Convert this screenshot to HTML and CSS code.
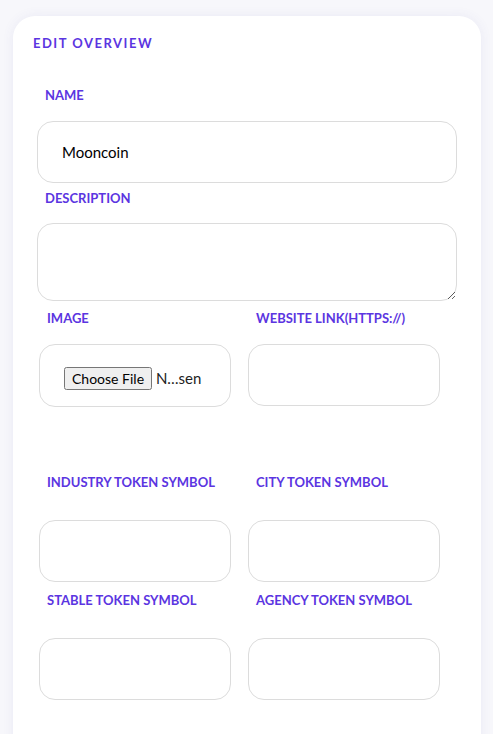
FILE: index.html
```html
<!DOCTYPE html>
<html lang="en">
<head>
<meta charset="utf-8">
<title>Edit Overview</title>
<link rel="stylesheet" href="styles.css">
</head>
<body>
<div class="card">
  <h2 class="title">EDIT OVERVIEW</h2>
  <div class="form">
    <label class="label label-name" for="name">NAME</label>
    <input class="text-input" id="name" type="text" value="Mooncoin">
    <label class="label label-desc" for="desc">DESCRIPTION</label>
    <textarea class="text-area" id="desc"></textarea>

    <div class="pair pair-1">
      <div class="field">
        <label class="label label-sm">IMAGE</label>
        <input class="box file-box" type="file">
      </div>
      <div class="field">
        <label class="label label-sm">WEBSITE LINK(HTTPS://)</label>
        <input class="box" type="text">
      </div>
    </div>

    <div class="pair pair-2">
      <div class="field">
        <label class="label label-lg">INDUSTRY TOKEN SYMBOL</label>
        <input class="box" type="text">
      </div>
      <div class="field">
        <label class="label label-lg">CITY TOKEN SYMBOL</label>
        <input class="box" type="text">
      </div>
    </div>

    <div class="pair pair-3">
      <div class="field">
        <label class="label label-lg">STABLE TOKEN SYMBOL</label>
        <input class="box" type="text">
      </div>
      <div class="field">
        <label class="label label-lg">AGENCY TOKEN SYMBOL</label>
        <input class="box" type="text">
      </div>
    </div>
  </div>
</div>
</body>
</html>
```

FILE: styles.css
```css
html, body {
  margin: 0;
  padding: 0;
}
body {
  background: #f7f7fb;
  font-family: "Lato", "Liberation Sans", sans-serif;
  color: #000;
  overflow: hidden;
  height: 734px;
}
.card {
  margin: 16px 12px 0 13px;
  padding: 19px 24px 40px 20px;
  background: #ffffff;
  border-radius: 22px;
  box-shadow: 0 0 12px rgba(80, 80, 160, 0.08);
  min-height: 760px;
  box-sizing: border-box;
}
.title {
  margin: 0;
  font-size: 13px;
  line-height: 16px;
  font-weight: 700;
  letter-spacing: 1.5px;
  color: #5b35e1;
}
.form {
  padding-left: 4px;
  display: flex;
  flex-direction: column;
}
.label {
  display: block;
  font-size: 13px;
  line-height: 16px;
  font-weight: 700;
  color: #5b35e1;
  margin-left: 8px;
}
.label-name {
  margin-top: 36px;
  margin-bottom: 18px;
}
.label-desc {
  margin-top: 7px;
  margin-bottom: 17px;
}
.text-input {
  display: block;
  box-sizing: border-box;
  width: 100%;
  height: 62px;
  margin: 0;
  padding: 0 24px;
  border: 1px solid #dcdcdc;
  border-radius: 16px;
  font-family: inherit;
  font-size: 15px;
  color: #000;
  background: #fff;
  outline: none;
}
.text-area {
  display: block;
  box-sizing: border-box;
  width: 100%;
  height: 78px;
  margin: 0;
  padding: 12px 24px;
  border: 1px solid #dcdcdc;
  border-radius: 16px;
  font-family: inherit;
  font-size: 15px;
  background: #fff;
  outline: none;
}
.pair {
  display: grid;
  grid-template-columns: 192px 192px;
  column-gap: 17px;
  margin-left: 2px;
}
.pair-1 {
  margin-top: 9px;
}
.pair-2 {
  margin-top: 67px;
}
.pair-3 {
  margin-top: 10px;
}
.field {
  display: flex;
  flex-direction: column;
}
.label-sm {
  margin-bottom: 18px;
}
.label-lg {
  margin-bottom: 30px;
}
.box {
  display: block;
  box-sizing: border-box;
  width: 192px;
  height: 62px;
  margin: 0;
  padding: 0 24px;
  border: 1px solid #dcdcdc;
  border-radius: 16px;
  font-family: inherit;
  font-size: 15px;
  background: #fff;
  outline: none;
}
.file-box {
  height: 63px;
  padding: 22px 24px 0 24px;
  color: #222;
}
.file-box::file-selector-button {
  font-family: inherit;
  font-size: 14px;
  padding: 1px 6px;
  margin-right: 4px;
}
```
